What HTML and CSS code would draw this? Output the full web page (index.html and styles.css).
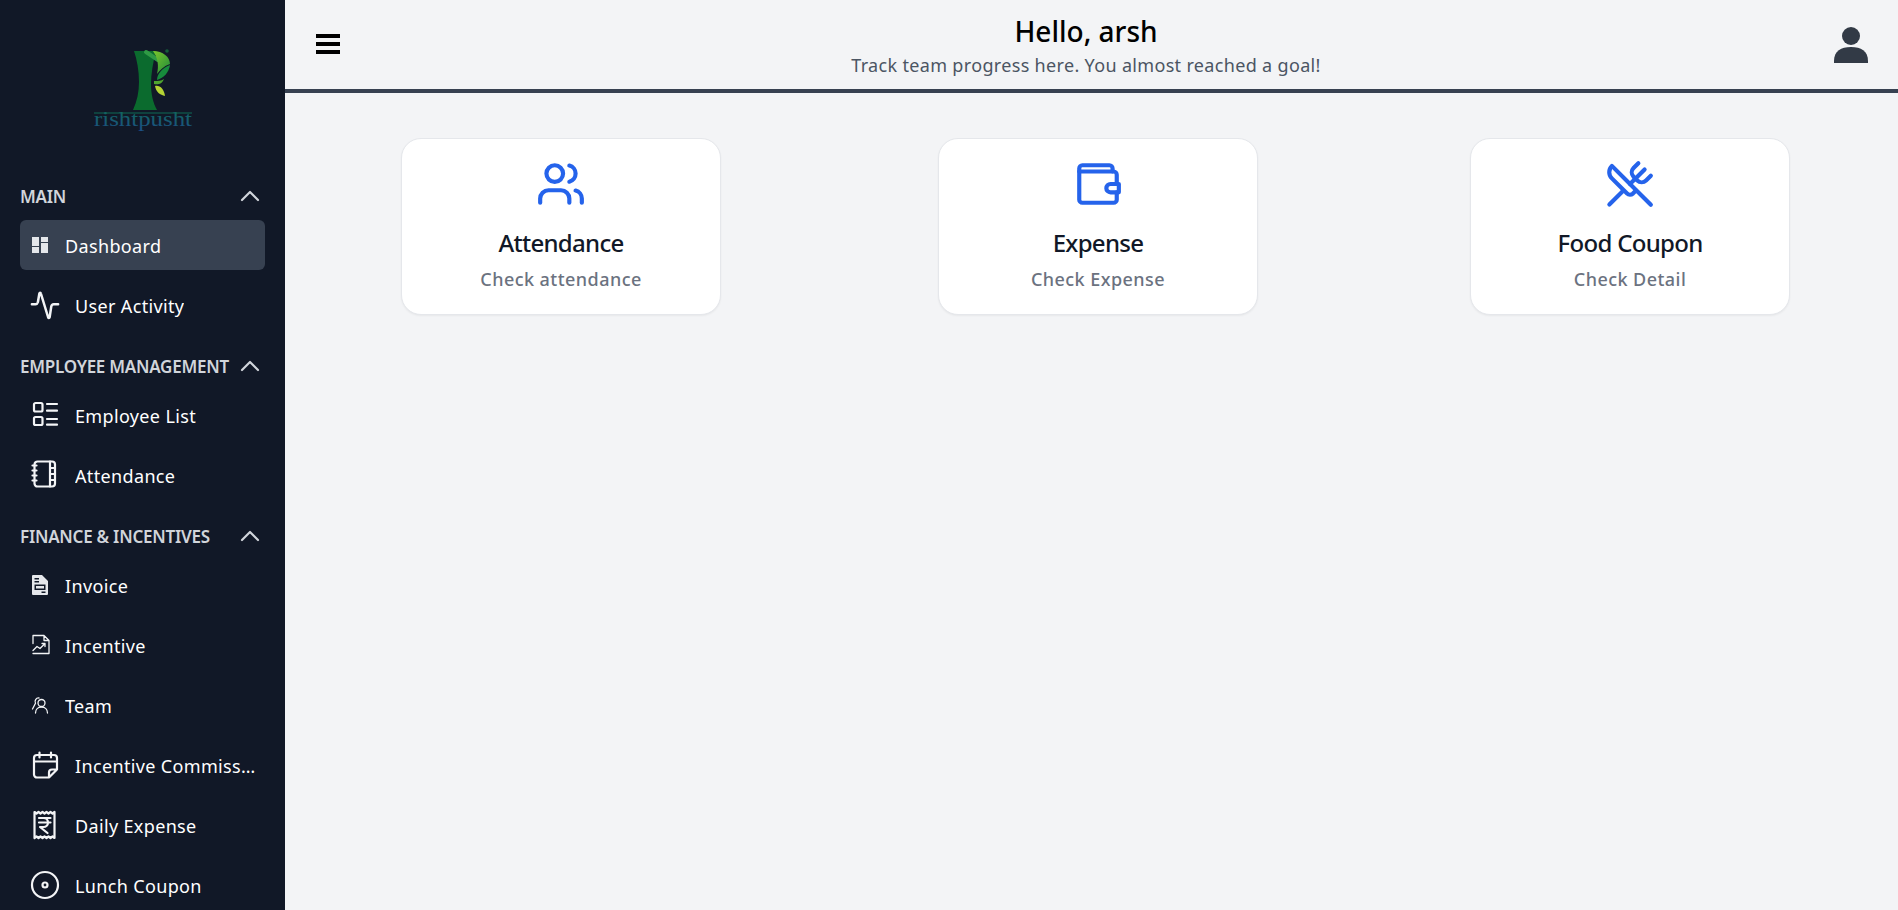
FILE: index.html
```html
<!DOCTYPE html>
<html lang="en">
<head>
  <meta charset="UTF-8" />
  <meta name="viewport" content="width=device-width, initial-scale=1.0" />
  <title>Dashboard</title>
  <link rel="stylesheet" href="styles.css">
</head>
<body>
  <div class="layout">
    <aside class="sidebar">
      <div class="logo">
        <svg class="logo-mark" viewBox="90 45 105 90">
          <defs>
            <linearGradient id="leafTop" x1="0" y1="0" x2="1" y2="1">
              <stop offset="0" stop-color="#7cc62c" />
              <stop offset="1" stop-color="#1f8a3a" />
            </linearGradient>
            <linearGradient id="logoText" x1="0" y1="0" x2="0" y2="1">
              <stop offset="0" stop-color="#0f6a56" />
              <stop offset="1" stop-color="#1c4f86" />
            </linearGradient>
          </defs>
          <path d="M134 51H156C153 62 151 74 151 84C151 94 153 103 157 110H133C137 101 139 92 139 82C139 71 137 60 134 51Z" fill="#0b6b2e" />
          <path d="M146 52L158 60" stroke="#2f9a45" stroke-width="4" stroke-linecap="round" />
          <path d="M153 51C163 51 170 57 170 64C164 66 160 70 157 74C159 66 158 58 153 51Z" fill="url(#leafTop)" />
          <path d="M170 65C169 72 164 78 157 80C157 74 162 68 170 65Z" fill="#178a3c" />
          <path d="M154 81C158 81 161 81 164 79C162 84 158 85 154 84Z" fill="#4fa52f" />
          <path d="M155 86C160 85 164 89 165 96C160 95 156 92 155 86Z" fill="#b5d334" />
          <circle cx="167" cy="51" r="1.8" fill="#155c3a" />
          <path d="M94 113H192" stroke="#0f6a56" stroke-width="1.2" />
          <text class="logo-text" x="94" y="126" textLength="98" lengthAdjust="spacingAndGlyphs" fill="url(#logoText)">rishtpusht</text>
        </svg>
      </div>

      <section class="nav-section">
        <div class="nav-heading">
          <span>MAIN</span>
          <svg class="chevron" viewBox="0 0 24 24"><path d="M4 16l8-8 8 8" /></svg>
        </div>
        <a class="nav-item active">
          <svg class="icon-sm" viewBox="0 1 16 20"><path class="solid" d="M0 2h7v9H0zM0 12h7v6H0zM9 2h7v5H9zM9 8h7v10H9z" /></svg>
          <span class="nav-label">Dashboard</span>
        </a>
        <a class="nav-item">
          <svg class="icon-lg" viewBox="0 0 24 24"><path d="M1.500 10.500h3c1 0 1.500-.5 1.800-1.500L7.500 2c.2-.8 1-.8 1.200 0l5.800 19c.3.8 1 .8 1.200 0l1.300-8.500c.2-1.200.8-2 2-2h3.500" /></svg>
          <span class="nav-label">User Activity</span>
        </a>
      </section>

      <section class="nav-section">
        <div class="nav-heading">
          <span>EMPLOYEE MANAGEMENT</span>
          <svg class="chevron" viewBox="0 0 24 24"><path d="M4 16l8-8 8 8" /></svg>
        </div>
        <a class="nav-item">
          <svg class="icon-lg thin" viewBox="0 0 30 30">
            <rect x="4" y="2" width="8.500" height="8.500" rx="1.500" />
            <rect x="4" y="16" width="8.500" height="8" rx="1.500" />
            <path d="M17 3h10M17 9.700h10M17 18h10M17 23.700h10" />
          </svg>
          <span class="nav-label">Employee List</span>
        </a>
        <a class="nav-item">
          <svg class="icon-lg thin" viewBox="0 0 30 30">
            <rect x="4.500" y="0.500" width="20.500" height="25" rx="3" />
            <path d="M20 0.500v25M2.500 4.500h4M2.500 9.500h4M2.500 14.500h4M2.500 19.500h4M20 7h5M20 13h5M20 19h5" />
          </svg>
          <span class="nav-label">Attendance</span>
        </a>
      </section>

      <section class="nav-section">
        <div class="nav-heading">
          <span>FINANCE &amp; INCENTIVES</span>
          <svg class="chevron" viewBox="0 0 24 24"><path d="M4 16l8-8 8 8" /></svg>
        </div>
        <a class="nav-item">
          <svg class="icon-sm" viewBox="0 1 16 20"><path class="solid" fill-rule="evenodd" d="M1 0H10L16 6V19a1 1 0 0 1-1 1H1a1 1 0 0 1-1-1V1a1 1 0 0 1 1-1ZM2.500 3v1.500H7V3ZM2.500 6v1.500H7V6ZM2.500 9.500V15H13.500V9.500ZM4 11H12V13.500H4ZM9.500 16.500V18H13.500V16.500Z" /></svg>
          <span class="nav-label">Invoice</span>
        </a>
        <a class="nav-item">
          <svg class="icon-sm line" viewBox="0 1.500 16 20"><path d="M1 9V1H12L17 6V19H1M12 1V6H17M1 16l4-4 3 2 5-5M10 9h3v3" /></svg>
          <span class="nav-label">Incentive</span>
        </a>
        <a class="nav-item">
          <svg class="icon-sm line" viewBox="0 0 16 20">
            <circle cx="9.500" cy="7" r="3.500" />
            <path d="M3.500 17c0-3.500 2.500-6 6-6s6 2.500 6 6M7 2a3.500 3.500 0 0 0-3.500 5.200L0.500 13" />
          </svg>
          <span class="nav-label">Team</span>
        </a>
        <a class="nav-item">
          <svg class="icon-lg thin" viewBox="0 0 30 30">
            <path d="M19 26.500H7a3 3 0 0 1-3-3V7a3 3 0 0 1 3-3h17a3 3 0 0 1 3 3v11.500ZM4 10.500h23M9.500 1.500v5M21 1.500v5M19 26.500v-5a3 3 0 0 1 3-3h5" />
          </svg>
          <span class="nav-label">Incentive Commission</span>
        </a>
        <a class="nav-item">
          <svg class="icon-lg thin" viewBox="0 0 30 30">
            <path d="M4.500 1l2 1.500 2-1.500 2 1.500 2-1.500 2 1.500 2-1.500 2 1.500 2-1.500 2 1.500 2-1.500V27l-2-1.500-2 1.500-2-1.500-2 1.500-2-1.500-2 1.500-2-1.500-2 1.500-2-1.500-2 1.500Z" />
            <path d="M9 7h11.500M9 11.500h11.500M10 7h3.500a4.500 4.500 0 0 1 0 9H10l7.500 6" />
          </svg>
          <span class="nav-label">Daily Expense</span>
        </a>
        <a class="nav-item">
          <svg class="icon-lg thin" viewBox="0 0 30 30">
            <circle cx="15" cy="14" r="13" />
            <circle cx="15" cy="14" r="2.500" />
          </svg>
          <span class="nav-label">Lunch Coupon</span>
        </a>
      </section>
    </aside>

    <main class="main">
      <header class="topbar">
        <button class="menu-btn" aria-label="Menu">
          <span></span><span></span><span></span>
        </button>
        <div class="greeting">
          <h1>Hello, arsh</h1>
          <p>Track team progress here. You almost reached a goal!</p>
        </div>
        <div class="user-btn">
          <svg viewBox="0 0 41 36"><circle cx="20" cy="9" r="9" /><path d="M3 36V34C3 24 10 20 20 20S37 24 37 34V36Z" /></svg>
        </div>
      </header>

      <div class="cards">
        <div class="card">
          <svg viewBox="0 0 24 24"><path d="M16 21v-2a4 4 0 0 0-4-4H6a4 4 0 0 0-4 4v2" /><circle cx="9" cy="7" r="4" /><path d="M22 21v-2a4 4 0 0 0-3-3.870" /><path d="M16 3.130a4 4 0 0 1 0 7.750" /></svg>
          <h3>Attendance</h3>
          <p>Check attendance</p>
        </div>
        <div class="card">
          <svg viewBox="0 0 24 24"><path d="M19 6V4.500A1.500 1.500 0 0 0 17.500 3H4.500A1.500 1.500 0 0 0 3 4.500v15A1.500 1.500 0 0 0 4.500 21h15a1.500 1.500 0 0 0 1.500-1.500V16" /><path d="M3 6h16.500A1.500 1.500 0 0 1 21 7.500V12" /><path d="M18 12h4v4h-4a2 2 0 0 1 0-4Z" /></svg>
          <h3>Expense</h3>
          <p>Check Expense</p>
        </div>
        <div class="card">
          <svg viewBox="0 0 24 24"><path d="m16 2-2.300 2.300a3 3 0 0 0 0 4.200l1.800 1.800a3 3 0 0 0 4.200 0L22 8" /><path d="M15 15 3.300 3.300a4.200 4.200 0 0 0 0 6l7.300 7.300c.7.7 2 .7 2.800 0L15 15Zm0 0 7 7" /><path d="m2.100 21.800 6.400-6.300" /><path d="m19 5-7 7" /></svg>
          <h3>Food Coupon</h3>
          <p>Check Detail</p>
        </div>
      </div>
    </main>
  </div>
</body>
</html>
```

FILE: styles.css
```css
* { box-sizing: border-box; }
html, body { height: 100%; }
body { margin: 0; font-family: "Noto Sans", "Open Sans", sans-serif; background: #f3f4f6; overflow: hidden; }
h1, h3, p { margin: 0; }

.layout { display: flex; height: 100vh; }

/* sidebar */
.sidebar { width: 285px; flex-shrink: 0; background: #111827; color: #fff; overflow: hidden; padding: 45px 20px 0; }
.logo { display: flex; justify-content: center; margin-bottom: 47px; }
.logo-mark { width: 105px; height: 90px; display: block; }
.logo-text { font-family: "Liberation Serif", serif; font-size: 21px; }

.nav-section { margin-bottom: 21px; }
.nav-heading { display: flex; align-items: center; justify-content: space-between; height: 28px; margin-bottom: 11px; font-size: 17px; font-weight: 600; letter-spacing: -0.25px; color: #d1d5db; white-space: nowrap; }
.chevron { width: 24px; height: 24px; margin-right: 3px; flex-shrink: 0; fill: none; stroke: #d1d5db; stroke-width: 2.2; stroke-linecap: round; stroke-linejoin: round; }

.nav-item { display: flex; align-items: center; height: 50px; margin-bottom: 10px; padding: 0 7px 0 10px; border-radius: 6px; color: #fff; }
.nav-item.active { margin-top: -1px; margin-bottom: 11px; padding-top: 2px; background: #374151; }
.nav-label { font-size: 18px; line-height: 24px; letter-spacing: 0.35px; white-space: nowrap; overflow: hidden; text-overflow: ellipsis; }

.icon-lg { width: 30px; height: 30px; margin-right: 15px; flex-shrink: 0; overflow: visible; fill: none; stroke: #f3f4f6; stroke-width: 2; stroke-linecap: round; stroke-linejoin: round; }
.icon-lg.thin { stroke-width: 2.200; }
.icon-sm { width: 16px; height: 20px; margin: 0 17px 0 2px; flex-shrink: 0; overflow: visible; fill: none; stroke: none; }
.icon-sm .solid { fill: #e5e7eb; }
.icon-sm.line { stroke: #f3f4f6; stroke-width: 1.300; stroke-linejoin: round; stroke-linecap: round; }

/* top bar */
.main { flex: 1; min-width: 0; }
.topbar { display: flex; align-items: center; justify-content: space-between; height: 93px; padding: 0 26px 0 30px; border-bottom: 4px solid #374151; }
.menu-btn { display: flex; flex-direction: column; gap: 4px; width: 26px; margin-top: -2px; padding: 0 1px; border: none; background: none; cursor: pointer; }
.menu-btn span { display: block; height: 4px; background: #000; }
.greeting { text-align: center; }
.greeting h1 { font-size: 28px; line-height: 38px; font-weight: 500; color: #000; }
.greeting p { margin-top: 3px; font-size: 18px; line-height: 24px; letter-spacing: 0.33px; color: #4b5563; }
.user-btn { width: 41px; height: 36px; }
.user-btn svg { display: block; width: 41px; height: 36px; fill: #323a46; }

/* cards */
.cards { display: grid; grid-template-columns: 537px 532px 320px; padding: 45px 0 0 116px; }
.card { width: 320px; height: 177px; padding-top: 20px; background: #fff; border: 1px solid #e5e7eb; border-radius: 20px; box-shadow: 0 1px 2px rgba(0, 0, 0, 0.05); text-align: center; }
.card svg { display: block; width: 50px; height: 50px; margin: 0 auto; fill: none; stroke: #2563eb; stroke-width: 2; stroke-linecap: round; stroke-linejoin: round; }
.card h3 { margin-top: 18px; font-size: 24px; line-height: 32px; font-weight: 500; letter-spacing: -0.7px; color: #111827; }
.card p { margin-top: 7px; font-size: 18px; line-height: 26px; font-weight: 500; letter-spacing: 0.45px; color: #6b7280; }
```
